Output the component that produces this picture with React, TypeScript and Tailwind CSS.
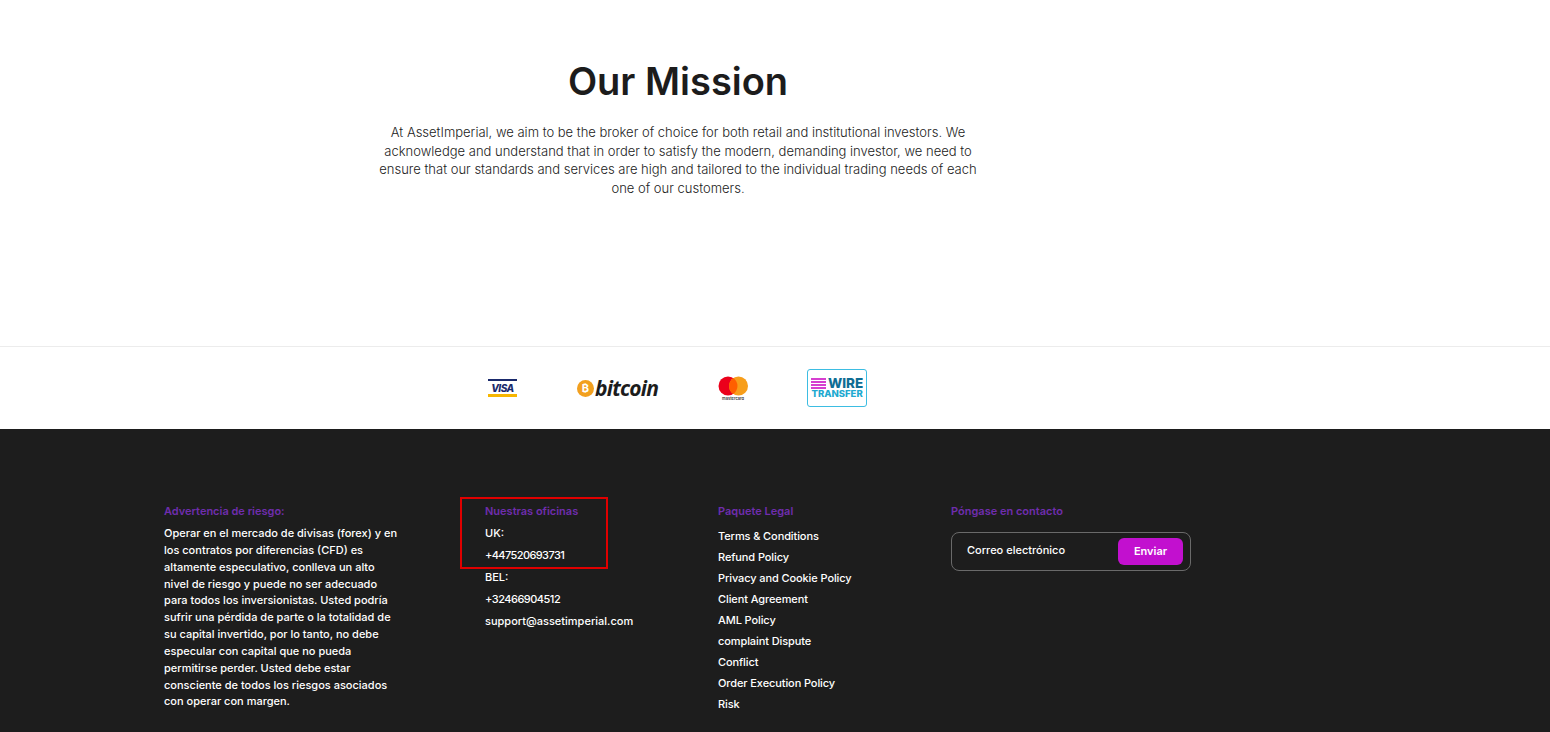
import React from 'react'

const legalLinks = [
  'Terms & Conditions',
  'Refund Policy',
  'Privacy and Cookie Policy',
  'Client Agreement',
  'AML Policy',
  'complaint Dispute',
  'Conflict',
  'Order Execution Policy',
  'Risk'
]

const riskLines = [
  'Operar en el mercado de divisas (forex) y en',
  'los contratos por diferencias (CFD) es',
  'altamente especulativo, conlleva un alto',
  'nivel de riesgo y puede no ser adecuado',
  'para todos los inversionistas. Usted podría',
  'sufrir una pérdida de parte o la totalidad de',
  'su capital invertido, por lo tanto, no debe',
  'especular con capital que no pueda',
  'permitirse perder. Usted debe estar',
  'consciente de todos los riesgos asociados',
  'con operar con margen.'
]

const missionLines = [
  'At AssetImperial, we aim to be the broker of choice for both retail and institutional investors. We',
  'acknowledge and understand that in order to satisfy the modern, demanding investor, we need to',
  'ensure that our standards and services are high and tailored to the individual trading needs of each',
  'one of our customers.'
]

function VisaLogo() {
  return (
    <div className="flex flex-col w-[29px] h-[18px] justify-between">
      <div className="h-[2px] bg-[#1a2a6c]" />
      <span className="text-[10px] leading-[10px] font-extrabold italic text-[#1a2a6c] text-center tracking-[-0.5px]">VISA</span>
      <div className="h-[3px] bg-[#f7b600]" />
    </div>
  )
}

function BitcoinLogo() {
  return (
    <div className="flex items-center gap-[1px]">
      <div className="flex items-center justify-center w-[17px] h-[17px] rounded-full bg-[#f2a01f] text-white text-[11px] font-bold leading-none">₿</div>
      <span className="text-[21px] leading-none font-bold italic text-[#1c1c1c] tracking-[-0.8px] font-['Open_Sans',sans-serif]">bitcoin</span>
    </div>
  )
}

function MastercardLogo() {
  return (
    <div className="flex flex-col items-center w-[30px]">
      <svg width="30" height="20" viewBox="0 0 30 20">
        <circle cx="10" cy="10" r="9.5" fill="#eb001b" />
        <circle cx="20.5" cy="10" r="9.5" fill="#f79e1b" />
        <path d="M15.25 2.1a9.5 9.5 0 0 1 0 15.8a9.5 9.5 0 0 1 0-15.8z" fill="#ff5f00" />
      </svg>
      <span className="text-[4px] leading-[5px] font-semibold text-[#333]">mastercard</span>
    </div>
  )
}

function WireLogo() {
  return (
    <div className="flex flex-col items-center justify-center w-[60px] h-[38px] rounded-[3px] border border-[#3dbde2] bg-white">
      <div className="flex items-center gap-[2px]">
        <div className="flex flex-col gap-[1px] w-[15px]">
          <div className="h-[2px] bg-[#d63fd0]" />
          <div className="h-[2px] bg-[#d63fd0]" />
          <div className="h-[2px] bg-[#d63fd0]" />
          <div className="h-[2px] bg-[#d63fd0]" />
        </div>
        <span className="text-[13.5px] leading-[12px] font-extrabold text-[#0f6d94]">WIRE</span>
      </div>
      <span className="text-[9.5px] leading-[10px] font-extrabold text-[#20a9d0]">TRANSFER</span>
    </div>
  )
}

function Heading({ children }: { children: React.ReactNode }) {
  return <h4 className="text-[11px] leading-[17px] font-semibold text-[#6f2dad]">{children}</h4>
}

export default function App() {
  return (
    <div className="h-[732px] overflow-hidden bg-white font-['Inter',sans-serif]">
      {/* Mission */}
      <section className="h-[346px] pt-[57px] pl-[378px]">
        <div className="w-[600px] text-center">
          <h2 className="text-[38px] leading-[48px] font-semibold text-[#1c1c1c]">Our Mission</h2>
          <p className="mt-[18px] text-[13px] leading-[18.7px] text-[#222] font-light">
            {missionLines.map((line) => (
              <span key={line} className="block whitespace-nowrap">{line}</span>
            ))}
          </p>
        </div>
      </section>

      {/* Payment methods */}
      <section className="h-[83px] border-t border-[#ececec] flex items-center pl-[488px]">
        <VisaLogo />
        <div className="ml-[60px]"><BitcoinLogo /></div>
        <div className="ml-[60px]"><MastercardLogo /></div>
        <div className="ml-[59px]"><WireLogo /></div>
      </section>

      {/* Footer */}
      <footer className="h-[303px] bg-[#1d1d1d] pt-[74px] pl-[164px] grid grid-cols-[321px_233px_233px_240px] content-start text-white">
        <div>
          <Heading>Advertencia de riesgo:</Heading>
          <p className="mt-[5px] text-[11px] leading-[16.85px] font-medium">
            {riskLines.map((line) => (
              <span key={line} className="block whitespace-nowrap">{line}</span>
            ))}
          </p>
        </div>

        <div className="relative">
          <Heading>Nuestras oficinas</Heading>
          <ul className="mt-[2px] text-[11px] font-medium">
            <li className="h-[22px] leading-[22px]">UK:</li>
            <li className="h-[22px] leading-[22px] tracking-[-0.6px]">+447520693731</li>
            <li className="h-[22px] leading-[22px]">BEL:</li>
            <li className="h-[22px] leading-[22px] tracking-[-0.5px]">+32466904512</li>
            <li className="h-[22px] leading-[22px]">support@assetimperial.com</li>
          </ul>
          <div className="absolute left-[-25px] top-[-6px] w-[148px] h-[72px] border-2 border-[#e00000]" />
        </div>

        <div>
          <Heading>Paquete Legal</Heading>
          <ul className="mt-[6px] text-[11px] font-medium tracking-[-0.1px]">
            {legalLinks.map((link) => (
              <li key={link} className="h-[21px] leading-[21px]">{link}</li>
            ))}
          </ul>
        </div>

        <div>
          <Heading>Póngase en contacto</Heading>
          <div className="mt-[12px] w-[240px] h-[39px] rounded-[8px] border border-[#6a6a6a] flex items-center justify-between pl-[15px] pr-[7px]">
            <span className="text-[11px] font-medium -mt-[3px]">Correo electrónico</span>
            <button className="w-[65px] h-[27px] rounded-[6px] bg-[#c210cf] text-[11px] font-semibold text-white">Enviar</button>
          </div>
        </div>
      </footer>
    </div>
  )
}
